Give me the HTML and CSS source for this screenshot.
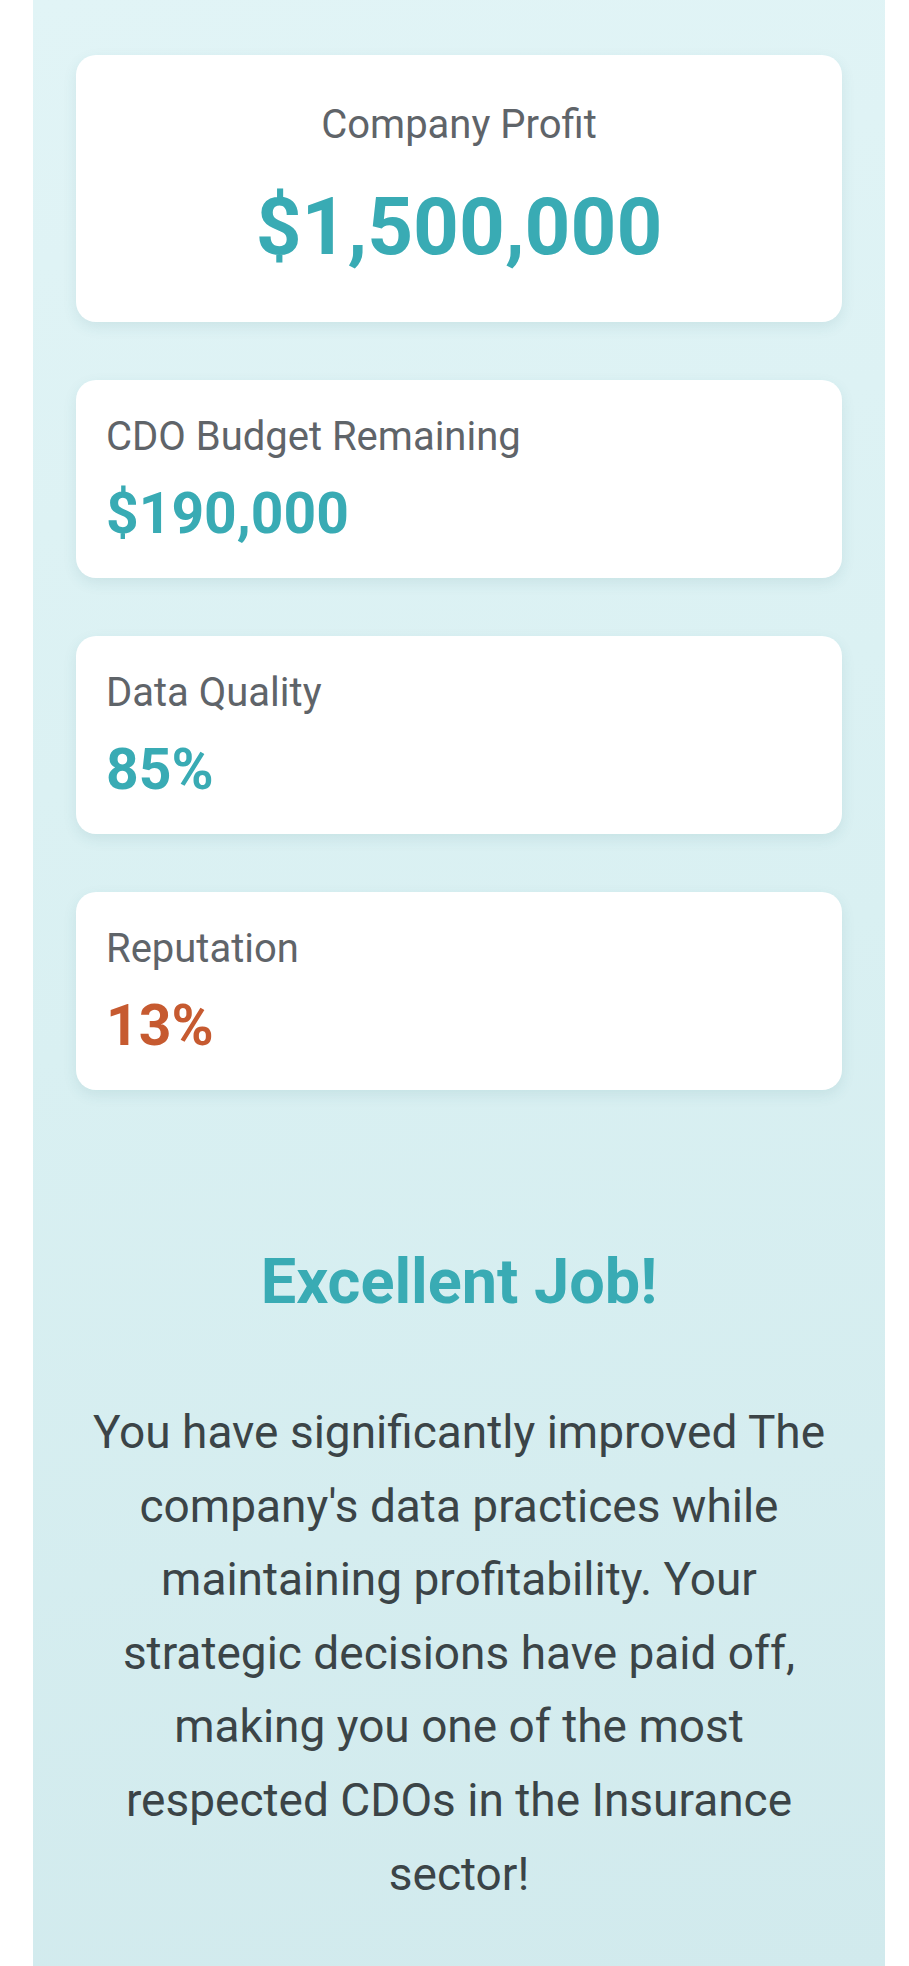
FILE: index.html
```html
<!DOCTYPE html>
<html lang="en">
<head>
<meta charset="utf-8">
<title>Results</title>
<link rel="stylesheet" href="styles.css">
</head>
<body>
<div class="page">
  <main class="panel">
    <section class="stats">
      <div class="card card-hero">
        <div class="label">Company Profit</div>
        <div class="value value-hero">$1,500,000</div>
      </div>
      <div class="card">
        <div class="label">CDO Budget Remaining</div>
        <div class="value">$190,000</div>
      </div>
      <div class="card">
        <div class="label">Data Quality</div>
        <div class="value">85%</div>
      </div>
      <div class="card">
        <div class="label">Reputation</div>
        <div class="value value-bad">13%</div>
      </div>
    </section>
    <section class="verdict">
      <h1 class="verdict-title">Excellent Job!</h1>
      <p class="verdict-text">You have significantly improved The company's data practices while maintaining profitability. Your strategic decisions have paid off, making you one of the most respected CDOs in the Insurance sector!</p>
    </section>
  </main>
</div>
</body>
</html>
```

FILE: styles.css
```css
* { box-sizing: border-box; }
html, body { margin: 0; padding: 0; background: #ffffff; }
body {
  font-family: Roboto, "Noto Sans", "Liberation Sans", sans-serif;
  color: #3b4447;
}
.page {
  padding: 0 24px 0 33px;
  min-height: 1966px;
  display: flex;
}
.panel {
  width: 852px;
  min-height: 1966px;
  background: linear-gradient(170deg, #e1f4f6 0%, #d9f0f2 50%, #d1eaed 100%);
  padding: 55px 43px 60px;
}
.stats {
  display: flex;
  flex-direction: column;
  gap: 58px;
}
.card {
  background: #ffffff;
  border-radius: 20px;
  box-shadow: 0 5px 14px rgba(40, 110, 120, 0.10);
  padding: 32.5px 30px 29.6px;
  display: flex;
  flex-direction: column;
  gap: 19.5px;
}
.card-hero {
  padding: 46px 30px 47.5px;
  align-items: center;
  gap: 29.5px;
}
.label {
  font-size: 40px;
  line-height: 48px;
  color: #5f6469;
}
.value {
  font-size: 57px;
  line-height: 68.4px;
  font-weight: 700;
  color: #39abb4;
}
.value-hero {
  font-size: 80px;
  line-height: 96px;
}
.value-bad {
  color: #c65a30;
}
.verdict {
  margin-top: 154.4px;
  text-align: center;
}
.verdict-title {
  margin: 0;
  font-size: 63px;
  line-height: 75.6px;
  font-weight: 700;
  color: #39abb4;
}
.verdict-text {
  margin: 76px 0 0;
  font-size: 46px;
  line-height: 73.6px;
  color: #3b4447;
}
```
